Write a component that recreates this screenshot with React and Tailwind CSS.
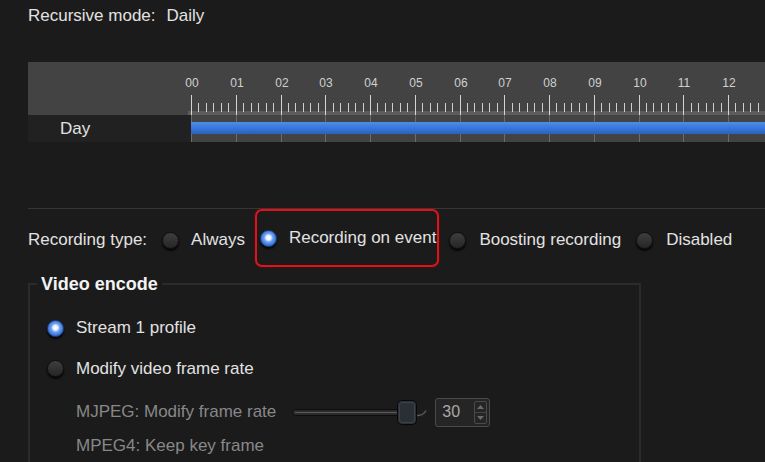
import React from 'react';

const HOUR = 44.75;
const hours = Array.from({ length: 14 }, (_, i) => i);

function Radio({ on }) {
  if (on) {
    return (
      <span className="block w-[17px] h-[17px] rounded-full shrink-0 border border-[#1d3f86] bg-[radial-gradient(circle_at_50%_45%,#ffffff_0%,#eef4ff_20%,#6a9ff0_40%,#3570d6_70%,#2555ad_100%)] shadow-[0_2px_2px_rgba(0,0,0,0.85)]" />
    );
  }
  return (
    <span className="block w-[17px] h-[17px] rounded-full shrink-0 border border-[#0f0f0f] bg-[linear-gradient(#3e3e3e,#262626)] shadow-[0_2px_2px_rgba(0,0,0,0.85)]" />
  );
}

function Ruler() {
  return (
    <svg width="574" height="80" className="block shrink-0 overflow-visible">
      <defs>
        <linearGradient id="bar" x1="0" y1="0" x2="0" y2="1">
          <stop offset="0" stopColor="#4d8de8" />
          <stop offset="0.5" stopColor="#3a77d9" />
          <stop offset="1" stopColor="#2b61c2" />
        </linearGradient>
      </defs>
      <rect width="574" height="80" fill="#434343" />
      <rect x="-3" y="49" width="577" height="4" fill="#5d5d5d" />
      {hours.map((h) => {
        const x = Math.round(h * HOUR) + 0.5;
        return (
          <g key={h}>
            {h <= 12 && (
              <text
                x={x + 0.5}
                y="25"
                textAnchor="middle"
                fontSize="12"
                fill="#d0d0d0"
                fontFamily="'Liberation Sans', Arial, sans-serif"
              >
                {String(h).padStart(2, '0')}
              </text>
            )}
            <line x1={x} x2={x} y1="33" y2="53" stroke="#d4d4d4" />
            <line x1={x} x2={x} y1="53" y2="80" stroke="#6c6c6c" />
            {[1, 2, 3, 4, 5].map((m) => {
              const mx = Math.round(h * HOUR + (m * HOUR) / 6) + 0.5;
              return <line key={m} x1={mx} x2={mx} y1="41" y2="50" stroke="#cfcfcf" />;
            })}
          </g>
        );
      })}
      <rect y="60" width="574" height="12" fill="url(#bar)" />
    </svg>
  );
}

function Slider() {
  return (
    <svg width="138" height="27" className="block shrink-0">
      <rect x="1.5" y="10.5" width="118" height="6" rx="3" fill="#2a2a2a" stroke="#0d0d0d" />
      <line x1="4" x2="112" y1="13.5" y2="13.5" stroke="#5c5c5c" />
      <path d="M126 16.5 Q132 17 135 11.5" fill="none" stroke="#5a5a5a" strokeWidth="1.5" />
      <rect x="106.5" y="1.5" width="19" height="24" rx="4" fill="#2a2f36" stroke="#080808" />
      <rect x="108.5" y="3.5" width="15" height="20" rx="3" fill="none" stroke="#3d434b" />
    </svg>
  );
}

function Spin() {
  return (
    <span className="flex flex-col items-center justify-center gap-[3px] w-[13px] h-[23px] mr-[2px] border border-[#4a4a4a] rounded-[2px]">
      <svg width="7" height="4"><path d="M0 4 L3.5 0 L7 4 Z" fill="#6a6a6a" /></svg>
      <span className="block w-full h-px bg-[#444]" />
      <svg width="7" height="4"><path d="M0 0 L3.5 4 L7 0 Z" fill="#6a6a6a" /></svg>
    </span>
  );
}

export default function App() {
  return (
    <div className="w-[765px] h-[462px] overflow-hidden bg-[#1b1b1b] pl-[28px] text-[17px] text-[#e2e2e2] font-['Liberation_Sans',Arial,sans-serif]">
      {/* Recursive mode */}
      <div className="pt-[6px] h-[26px] leading-[20px]">
        Recursive mode:<span className="ml-[11px]">Daily</span>
      </div>

      {/* Timeline */}
      <div className="mt-[36px] flex">
        <div className="w-[163px] shrink-0 flex flex-col">
          <div className="h-[53px] bg-[#434343]" />
          <div className="h-[27px] bg-[#212121] flex items-center pl-[32px] leading-[20px]">Day</div>
        </div>
        <Ruler />
      </div>

      {/* Recording type */}
      <div className="mt-[66px] border-t border-[#353535]">
        <div className="h-[62px] flex items-center leading-[20px] whitespace-nowrap">
          <span>Recording type:</span>
          <span className="ml-[15px]"><Radio /></span>
          <span className="ml-[12px]">Always</span>
          <div className="ml-[10px] self-start h-[58px] flex items-center gap-[12px] pl-[3px] pr-[1px] border-2 border-[#e0121c] rounded-[7px] shadow-[0_0_3px_rgba(220,20,20,0.35)]">
            <Radio on />
            <span>Recording on event</span>
          </div>
          <span className="ml-[10px]"><Radio /></span>
          <span className="ml-[13px]">Boosting recording</span>
          <span className="ml-[15px]"><Radio /></span>
          <span className="ml-[13px]">Disabled</span>
        </div>

        {/* Video encode */}
        <fieldset className="mt-[2px] w-[613px] border-2 border-[#2b2b2b] h-[220px]">
          <legend className="ml-[7px] px-[4px] text-[18px] font-bold leading-[22px] text-[#f2f2f2]">
            Video encode
          </legend>
          <div className="pt-[13px] pl-[17px] leading-[20px]">
            <div className="h-[40px] flex items-center gap-[12px]">
              <Radio on />
              <span>Stream 1 profile</span>
            </div>
            <div className="h-[41px] flex items-center gap-[12px]">
              <Radio />
              <span>Modify video frame rate</span>
            </div>
            <div className="h-[46px] flex items-center pl-[29px] text-[#888]">
              <span>MJPEG: Modify frame rate</span>
              <span className="ml-[15px]"><Slider /></span>
              <div className="ml-[6px] w-[55px] h-[29px] flex items-center justify-between border border-[#4a4a4a] rounded-[3px] bg-[#252525]">
                <span className="pl-[6px] text-[16px] text-[#a9a9a9]">30</span>
                <Spin />
              </div>
            </div>
            <div className="h-[21px] flex items-center pl-[29px] text-[#888]">
              MPEG4: Keep key frame
            </div>
          </div>
        </fieldset>
      </div>
    </div>
  );
}
